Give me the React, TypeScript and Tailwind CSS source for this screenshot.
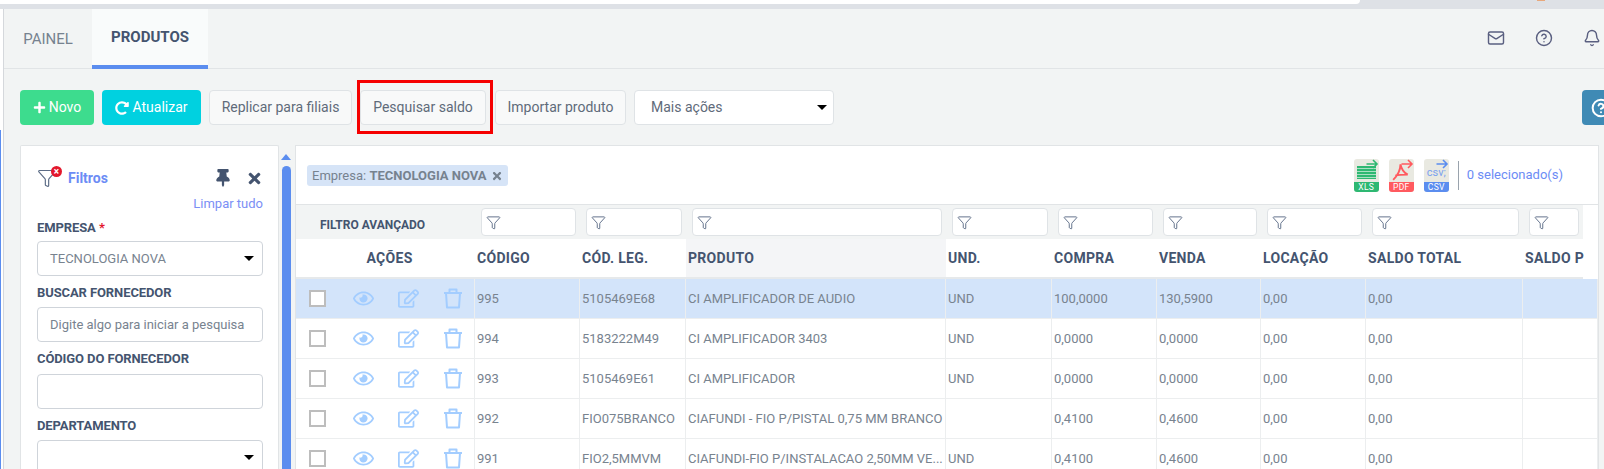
import { Bell, CircleHelp, Funnel, Mail } from 'lucide-react';
import { FaPlus, FaRedoAlt, FaRegEdit, FaRegEye, FaThumbtack, FaTimes } from 'react-icons/fa';

const gridCols = 'grid grid-cols-[179px_105px_106px_260px_106px_105px_104px_105px_157px_1fr]';

const headers = ['CÓDIGO', 'CÓD. LEG.', 'PRODUTO', 'UND.', 'COMPRA', 'VENDA', 'LOCAÇÃO', 'SALDO TOTAL', 'SALDO P'];

const rows = [
    ['995', '5105469E68', 'CI AMPLIFICADOR DE AUDIO', 'UND', '100,0000', '130,5900', '0,00', '0,00', ''],
    ['994', '5183222M49', 'CI AMPLIFICADOR 3403', 'UND', '0,0000', '0,0000', '0,00', '0,00', ''],
    ['993', '5105469E61', 'CI AMPLIFICADOR', 'UND', '0,0000', '0,0000', '0,00', '0,00', ''],
    ['992', 'FIO075BRANCO', 'CIAFUNDI - FIO P/PISTAL 0,75 MM BRANCO', '', '0,4100', '0,4600', '0,00', '0,00', ''],
    ['991', 'FIO2,5MMVM', 'CIAFUNDI-FIO P/INSTALACAO 2,50MM VE...', 'UND', '0,4100', '0,4600', '0,00', '0,00', ''],
];

const Label = ({ children }: { children: React.ReactNode }) => (
    <div className="text-[13px] leading-[16px] font-bold text-[#44546f] tracking-[-0.1px]">{children}</div>
);

const Caret = () => (
    <span className="ml-auto w-0 h-0 border-x-[5px] border-x-transparent border-t-[5px] border-t-black"></span>
);

const FilterInput = () => (
    <div className="h-[28px] ml-[6px] mr-[4px] bg-white border border-[#dfe3e6] rounded-[4px] flex items-center pl-[4px]">
        <Funnel size={15} strokeWidth={1.5} className="text-[#5b6b85]" />
    </div>
);

const TrashIcon = () => (
    <svg viewBox="0 0 20 21" className="ml-[24px] w-[20px] h-[21px]" fill="none" stroke="currentColor" strokeWidth="2" strokeLinejoin="round">
        <path d="M1 5h18M6.5 5V1.5h7V5M3 5l1 14.5h12L17 5" />
    </svg>
);

const ExportIcon = ({ label, band, arrow, children }: { label: string; band: string; arrow: string; children: React.ReactNode }) => (
    <div className="relative w-[25px] h-[33px] bg-[#e9e9e1] rounded-[3px] overflow-hidden flex flex-col">
        <div className="flex-1 relative">{children}</div>
        <svg viewBox="0 0 12 10" className="absolute top-0 right-0 w-[13px] h-[10px]" fill="none" stroke={arrow} strokeWidth="1.6">
            <path d="M0 5h10M6.5 1l4 4-4 4" />
        </svg>
        <div className="h-[10px] text-white text-[8.5px] leading-[10px] text-center tracking-[0.3px]" style={{ backgroundColor: band }}>{label}</div>
    </div>
);

export default function App() {
    return (
        <div className="w-[1604px] h-[469px] overflow-hidden flex flex-col bg-[#f2f4f4] font-['Roboto',sans-serif] text-[#5f6b7a]">
            {/* barra do navegador */}
            <div className="h-[9px] shrink-0 bg-[#dee1e6] flex">
                <div className="w-[1360px] h-[4px] bg-white rounded-br-[10px]"></div>
                <div className="ml-[177px] w-[8px] h-[1px] bg-[#e8a87c]"></div>
            </div>

            <div className="flex-1 min-h-0 flex">
                <div className="w-[4px] shrink-0 bg-white border-r border-[#d5d8dc] flex flex-col">
                    <div className="h-[121px]"></div>
                    <div className="w-[1px] flex-1 bg-[#5b8def]"></div>
                </div>

                <div className="flex-1 min-w-0 flex flex-col">
                    {/* abas */}
                    <div className="h-[60px] shrink-0 flex border-b border-[#e1e4e6]">
                        <div className="w-[88px] pt-[1px] flex items-center justify-center text-[15px] text-[#76828f]">PAINEL</div>
                        <div className="w-[116px] pt-[1px] flex items-center justify-center text-[15px] font-bold text-[#44546f] bg-[#f9fbfb] border-b-4 border-[#5b8def] mb-[-1px]">PRODUTOS</div>
                        <div className="ml-auto flex items-center gap-[30px] pr-[3px] text-[#5a5f80] pb-[2px]">
                            <Mail size={18} strokeWidth={1.9} />
                            <CircleHelp size={18} strokeWidth={1.9} />
                            <Bell size={18} strokeWidth={1.9} />
                        </div>
                    </div>

                    {/* acoes */}
                    <div className="h-[76px] shrink-0 flex items-center pl-[16px] text-[14px] pt-[1px]">
                        <button className="w-[74px] h-[35px] bg-[#3ddc8e] text-white rounded-[4px] flex items-center justify-center gap-[3px]"><FaPlus size={13} />Novo</button>
                        <button className="ml-[8px] w-[99px] h-[35px] bg-[#00d1e0] text-white rounded-[4px] flex items-center justify-center gap-[3px]"><FaRedoAlt size={14} />Atualizar</button>
                        <button className="ml-[8px] w-[143px] h-[35px] bg-[#f8f9f9] border border-[#dfe3e6] rounded-[4px] text-[#5f6b7a]">Replicar para filiais</button>
                        <div className="ml-[5px] mb-[2px] w-[136px] h-[54px] border-[3px] border-[#f50000] flex items-center">
                            <button className="mt-[2px] w-[126px] h-[35px] bg-[#f8f9f9] border border-[#dfe3e6] rounded-[4px] text-[#5f6b7a] shrink-0">Pesquisar saldo</button>
                        </div>
                        <button className="ml-[2px] w-[131px] h-[35px] bg-[#f8f9f9] border border-[#dfe3e6] rounded-[4px] text-[#5f6b7a]">Importar produto</button>
                        <div className="ml-[8px] w-[200px] h-[35px] bg-white border border-[#dfe3e6] rounded-[4px] flex items-center pl-[16px] pr-[6px] text-[#5f6b7a]">Mais ações<Caret /></div>
                        <div className="ml-auto mr-[-18px] w-[40px] h-[35px] bg-[#3f8ab5] rounded-[4px] flex items-center pl-[9px] text-white"><CircleHelp size={20} strokeWidth={2.4} /></div>
                    </div>

                    <div className="flex-1 min-h-0 flex pl-[16px] pr-[5px]">
                        {/* filtros */}
                        <div className="w-[259px] shrink-0 bg-white border border-[#e1e4e6] border-b-0 rounded-t-[2px] pl-[16px] pr-[15px] pt-[22px]">
                            <div className="flex items-center h-[20px]">
                                <div className="relative w-[24px] h-[20px]">
                                    <Funnel size={20} strokeWidth={1.4} className="text-[#5b6b85]" />
                                    <span className="absolute right-[-1px] top-[-2px] w-[11px] h-[11px] rounded-full bg-[#e3182d] text-white text-[10px] leading-[11px] text-center font-bold">×</span>
                                </div>
                                <span className="ml-[7px] text-[14px] font-bold text-[#6c8cf5]">Filtros</span>
                                <FaThumbtack size={18} className="ml-auto text-[#44546f]" />
                                <FaTimes size={17} className="ml-[14px] text-[#44546f]" />
                            </div>
                            <div className="mt-[8px] text-right text-[13px] leading-[16px] text-[#7b8ff5]">Limpar tudo</div>
                            <div className="mt-[8px]"><Label>EMPRESA <span className="text-[#e3182d]">*</span></Label></div>
                            <div className="mt-[5px] h-[35px] border border-[#cfd4da] rounded-[4px] flex items-center pl-[12px] pr-[8px] text-[13px] text-[#78838f]">TECNOLOGIA NOVA<Caret /></div>
                            <div className="mt-[9px]"><Label>BUSCAR FORNECEDOR</Label></div>
                            <div className="mt-[6px] h-[35px] border border-[#cfd4da] rounded-[4px] flex items-center pl-[12px] text-[13px] text-[#78838f]">Digite algo para iniciar a pesquisa</div>
                            <div className="mt-[9px]"><Label>CÓDIGO DO FORNECEDOR</Label></div>
                            <div className="mt-[7px] h-[35px] border border-[#cfd4da] rounded-[4px]"></div>
                            <div className="mt-[9px]"><Label>DEPARTAMENTO</Label></div>
                            <div className="mt-[6px] h-[35px] border border-[#cfd4da] rounded-[4px] flex items-center pr-[8px]"><Caret /></div>
                        </div>

                        {/* barra de rolagem */}
                        <div className="w-[16px] shrink-0 pl-[2px] pr-[4px] flex flex-col items-center">
                            <span className="mt-[9px] w-0 h-0 border-x-[5px] border-x-transparent border-b-[6px] border-b-[#5b8def]"></span>
                            <div className="mt-[6px] w-[9px] flex-1 bg-[#5b8def] rounded-t-[5px]"></div>
                        </div>

                        {/* tabela */}
                        <div className="flex-1 min-w-0 bg-white border border-[#e1e4e6] border-b-0 overflow-hidden">
                            <div className="h-[59px] flex items-center pl-[11px] border-b border-[#e1e4e6]">
                                <div className="h-[21px] mt-[1px] bg-[#d6e4f7] rounded-[3px] px-[5px] flex items-center text-[13px] text-[#76828f]">
                                    Empresa:&nbsp;<b className="font-bold">TECNOLOGIA NOVA</b>
                                    <FaTimes size={12} className="ml-[4px]" />
                                </div>
                                <div className="ml-auto flex items-center pr-[35px]">
                                    <ExportIcon label="XLS" band="#2eb872" arrow="#2eb872">
                                        <div className="absolute left-[3px] top-[7px] w-[19px] h-[13px] bg-[repeating-linear-gradient(#2eb872_0_2px,#a9e0c3_2px_3px)]"></div>
                                    </ExportIcon>
                                    <div className="ml-[10px]">
                                        <ExportIcon label="PDF" band="#ff5a5f" arrow="#ff5a5f">
                                            <svg viewBox="0 0 24 22" className="absolute inset-0 w-full h-full" fill="none" stroke="#ff5a5f" strokeWidth="1.8">
                                                <path d="M11 5c0 6-3 11-7 15M11 5c1 5 3 8 7 10M6 16c4-1 8-1 12-1" />
                                            </svg>
                                        </ExportIcon>
                                    </div>
                                    <div className="ml-[10px]">
                                        <ExportIcon label="CSV" band="#5b8def" arrow="#5b8def">
                                            <div className="absolute left-[3px] top-[8px] text-[11px] leading-[12px] text-[#7ba2ef]">csv;</div>
                                        </ExportIcon>
                                    </div>
                                    <div className="ml-[9px] w-px h-[29px] bg-[#9aa3ad]"></div>
                                    <div className="ml-[8px] text-[13px] text-[#6c8cf5]">0 selecionado(s)</div>
                                </div>
                            </div>

                            {/* filtro avancado */}
                            <div className={`${gridCols} w-[1287px] h-[34px] bg-[#f2f4f4] items-center`}>
                                <div className="pl-[24px] pt-[5px] text-[12px] font-bold text-[#44546f]">FILTRO AVANÇADO</div>
                                {headers.map((h) => <FilterInput key={h} />)}
                            </div>

                            {/* cabecalho */}
                            <div className={`${gridCols} w-[1287px] h-[40px] border-b-2 border-[#e6e9eb] text-[14px] font-bold text-[#44546f] tracking-[0.3px]`}>
                                <div className="pl-[8px] pt-[1px] flex items-center justify-center">AÇÕES</div>
                                {headers.map((h) => (
                                    <div key={h} className={`pl-[2px] pt-[1px] flex items-center whitespace-nowrap ${h === 'PRODUTO' ? 'bg-[#f4f5f7]' : ''}`}>{h}</div>
                                ))}
                            </div>

                            {/* linhas */}
                            {rows.map((row, i) => (
                                <div key={row[0]} className={`${gridCols} h-[40px] border-b border-[#eceeef] text-[13px] text-[#78838f] ${i === 0 ? 'bg-[#d3e4fa]' : ''}`}>
                                    <div className="flex items-center pl-[13px] border-r border-[#eceeef] text-[#a3cdff]">
                                        <span className="w-[17px] h-[17px] bg-white border-2 border-[#bdbdbd]"></span>
                                        <FaRegEye size={21} className="ml-[27px]" />
                                        <FaRegEdit size={21} className="ml-[24px]" />
                                        <TrashIcon />
                                    </div>
                                    {row.map((cell, j) => (
                                        <div key={j} className="flex items-center pl-[2px] border-r border-[#eceeef] whitespace-nowrap overflow-hidden">{cell}</div>
                                    ))}
                                </div>
                            ))}
                        </div>
                    </div>
                </div>
            </div>
        </div>
    );
}
